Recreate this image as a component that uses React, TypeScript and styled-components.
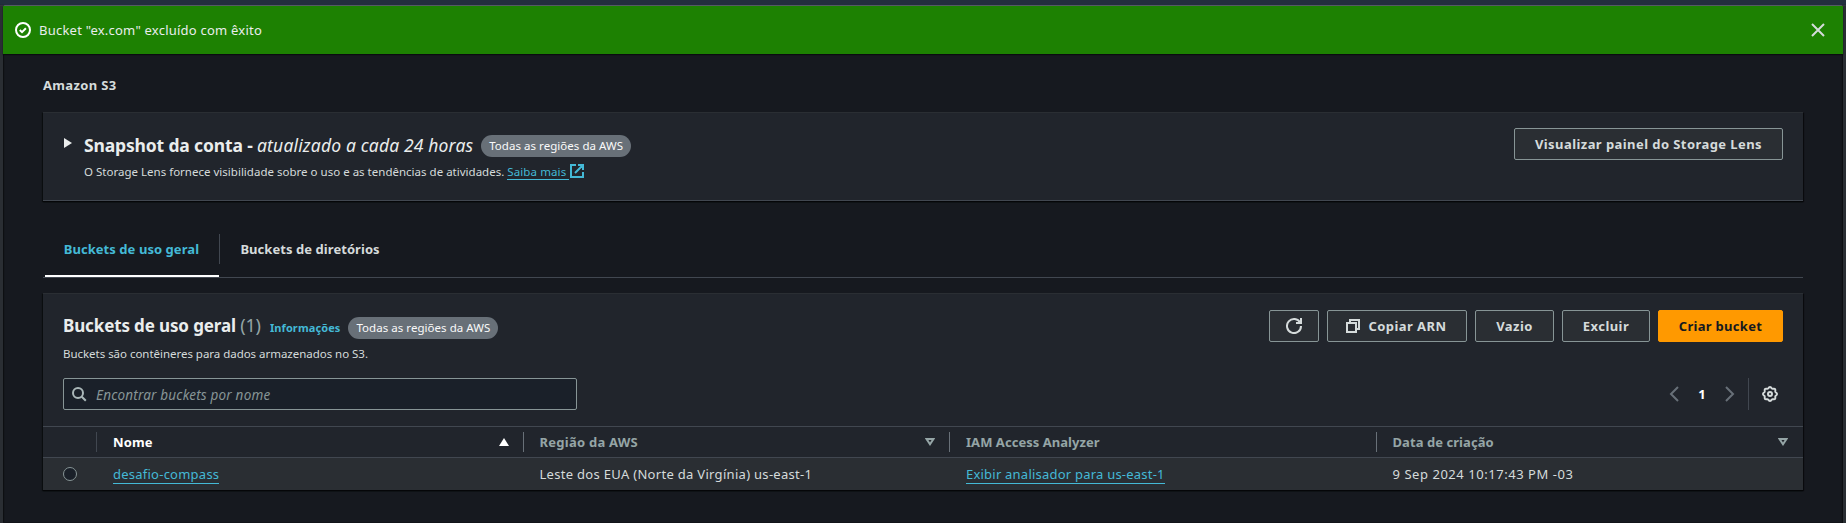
import React from "react";
import styled, { createGlobalStyle, css } from "styled-components";

const c = {
  page: "#16191f",
  panel: "#21252c",
  raised: "#2a2e33",
  line: "#414750",
  control: "#879596",
  text: "#d5dbdb",
  heading: "#eaeded",
  muted: "#95a5a6",
  link: "#44b9d6",
};

const GlobalStyle = createGlobalStyle`
  * { box-sizing: border-box; }
  body {
    margin: 0;
    background: ${c.page};
    color: ${c.text};
    font-family: "Noto Sans", sans-serif;
    font-size: 13px;
    line-height: 20px;
  }
  h1, h2, p { margin: 0; }
  button { font-family: inherit; cursor: pointer; }
  svg { display: block; flex: none; }
`;

const Shell = styled.div`
  display: flex;
  flex-direction: column;
  height: 523px;
  overflow: hidden;
  white-space: nowrap;
`;
const TopBar = styled.div`
  flex: none;
  height: 6px;
  background: #232f3e;
  border-bottom: 1px solid #545b64;
`;
const Body = styled.div`
  display: flex;
  flex: 1;
  min-height: 0;
`;
const Rail = styled.div`
  width: 3px;
  background: ${c.raised};
  box-shadow: 0 0 1px 1px rgba(0, 0, 0, 0.4);
`;
const Main = styled.main`
  flex: 1;
  min-width: 0;
  border-bottom: 1px solid #111318;
`;
const Flash = styled.div`
  display: flex;
  align-items: center;
  height: 48px;
  padding: 0 17px 0 12px;
  gap: 8px;
  background: #1d8102;
  color: ${c.heading};
  box-shadow: 0 1px 1px #0a0c0f;
  position: relative;
  letter-spacing: 0.23px;
`;
const FlashText = styled.span`
  flex: 1;
`;
const Content = styled.div`
  padding: 0 40px;
`;
const Breadcrumb = styled.div`
  height: 58px;
  padding-top: 21px;
  font-weight: 700;
  letter-spacing: 0.35px;
`;
const panel = css`
  background: ${c.panel};
  border-top: 1px solid ${c.raised};
  box-shadow: 0 1px 1px #050608, 1px 1px 1px rgba(0, 0, 0, 0.5), -1px 1px 1px rgba(0, 0, 0, 0.4);
`;
const Snapshot = styled.section`
  ${panel}
  display: flex;
  height: 89px;
  padding: 15px 20px 0 21px;
  border-bottom: 1px solid ${c.line};
`;
const Toggle = styled.div`
  width: 20px;
  padding-top: 10px;
`;
const SnapshotBody = styled.div`
  flex: 1;
`;
const TitleRow = styled.div`
  display: flex;
  align-items: center;
  height: 34px;
`;
const SnapshotTitle = styled.h2`
  font-size: 17.5px;
  line-height: 24px;
  font-weight: 700;
  letter-spacing: -0.15px;
  color: ${c.heading};
  em {
    font-weight: 400;
    letter-spacing: 0.16px;
  }
`;
const Badge = styled.span<{ $left: number }>`
  height: 22px;
  margin: 2px 0 0 ${(p) => p.$left}px;
  padding: 0 8px;
  border-radius: 11px;
  background: #687078;
  color: #fafafa;
  font-size: 11.5px;
  line-height: 22px;
  letter-spacing: 0.04px;
`;
const Small = styled.p<{ $ls?: number }>`
  display: flex;
  margin-top: 1px;
  font-size: 11.5px;
  line-height: 18px;
  letter-spacing: ${(p) => p.$ls ?? 0}px;
`;
const Link = styled.a`
  color: ${c.link};
  box-shadow: inset 0 -1px 0 ${c.link};
`;
const MoreLink = styled(Link)`
  height: 17px;
  margin-left: 3px;
  padding-right: 3px;
  letter-spacing: 0.1px;
`;
const Button = styled.button<{ $primary?: boolean; $icon?: boolean; $width: number }>`
  display: flex;
  flex: none;
  align-items: center;
  justify-content: center;
  gap: 8px;
  width: ${(p) => p.$width}px;
  height: 32px;
  padding: 0 ${(p) => (p.$icon ? 3 : 0)}px 0 0;
  border: 1px solid ${(p) => (p.$primary ? "#ff9900" : c.control)};
  border-radius: 2px;
  background: ${(p) => (p.$primary ? "#ff9900" : c.raised)};
  color: ${(p) => (p.$primary ? "#16191f" : c.text)};
  font-size: 13px;
  font-weight: 700;
  line-height: 20px;
  letter-spacing: ${(p) => (p.$primary ? 0.3 : 0.43)}px;
`;
const Tabs = styled.nav`
  display: flex;
  align-items: flex-end;
  height: 77px;
  margin-bottom: 15px;
  border-bottom: 1px solid ${c.line};
  font-weight: 700;
  letter-spacing: 0.06px;
`;
const Tab = styled.div<{ $active?: boolean }>`
  height: 43px;
  margin-left: ${(p) => (p.$active ? 2 : 0)}px;
  padding: 5px 20px 0 ${(p) => (p.$active ? 18.7 : 20.3)}px;
  color: ${(p) => (p.$active ? c.link : c.text)};
  border-bottom: 2px solid ${(p) => (p.$active ? "#ffffff" : "transparent")};
`;
const Divider = styled.div<{ $h: number; $color?: string }>`
  flex: none;
  width: 1px;
  height: ${(p) => p.$h}px;
  background: ${(p) => p.$color ?? c.line};
`;
const TabDivider = styled(Divider)`
  margin-bottom: 13px;
`;
const Buckets = styled.section`
  ${panel}
  height: 197px;
`;
const BucketsHeader = styled.header`
  display: flex;
  height: 84px;
  padding: 16px 20px 0;
`;
const HeaderText = styled.div`
  flex: 1;
`;
const BucketsTitle = styled.h1`
  font-size: 17px;
  line-height: 24px;
  font-weight: 700;
  letter-spacing: -0.13px;
  color: ${c.heading};
  margin-top: -3px;
  span {
    color: ${c.muted};
    font-weight: 400;
    font-size: 18px;
  }
`;
const InfoLink = styled.a`
  margin: 2px 0 0 9px;
  color: ${c.link};
  font-size: 11px;
  font-weight: 700;
  letter-spacing: 0.1px;
`;
const Actions = styled.div`
  display: flex;
  gap: 8px;
`;
const Tools = styled.div`
  display: flex;
  align-items: center;
  justify-content: space-between;
  height: 32px;
  padding: 0 25px 0 20px;
  margin-bottom: 16px;
`;
const Search = styled.label`
  display: flex;
  align-items: center;
  gap: 9px;
  width: 514px;
  height: 32px;
  padding: 0 7px;
  border: 1px solid ${c.control};
  border-radius: 2px;
  background: #1a2029;
  color: #aab7b8;
`;
const SearchInput = styled.input`
  flex: 1;
  padding: 2px 0 0;
  border: 0;
  outline: 0;
  background: none;
  font: italic 13.5px/20px "Noto Sans", sans-serif;
  letter-spacing: 0.19px;
  &::placeholder {
    color: #879596;
    opacity: 1;
  }
`;
const Pager = styled.div`
  display: flex;
  align-items: center;
  color: #687078;
`;
const PageNumber = styled.span`
  width: 40px;
  text-align: center;
  color: #ffffff;
  font-weight: 700;
`;
const PagerDivider = styled(Divider)`
  margin: 0 13px 0 10px;
`;
const Row = styled.div<{ $head?: boolean }>`
  display: grid;
  grid-template-columns: 54px repeat(4, 1fr);
  height: 32px;
  border: solid ${c.line};
  border-width: ${(p) => (p.$head ? "1px 0" : "0")};
  background: ${(p) => (p.$head ? c.panel : c.raised)};
`;
const SelectCell = styled.div<{ $head?: boolean }>`
  display: flex;
  align-items: center;
  justify-content: ${(p) => (p.$head ? "flex-end" : "flex-start")};
  padding-left: 20px;
`;
const HeadCell = styled.div<{ $sorted?: boolean; $gap: number; $ls: number }>`
  display: flex;
  align-items: center;
  justify-content: space-between;
  padding-left: 16px;
  color: ${(p) => (p.$sorted ? "#ffffff" : c.muted)};
  font-weight: 700;
  letter-spacing: ${(p) => p.$ls}px;
  svg {
    margin: 0 ${(p) => p.$gap}px 0 auto;
  }
`;
const Cell = styled.div<{ $ls: number }>`
  display: flex;
  align-items: center;
  padding-left: 16px;
  letter-spacing: ${(p) => p.$ls}px;
`;
const Radio = styled.span`
  width: 14px;
  height: 14px;
  border: 1px solid ${c.control};
  border-radius: 50%;
  background: #1a2029;
`;

type IconProps = { d: string; size?: number; color?: string };
const Icon = ({ d, size = 16, color = "currentColor" }: IconProps) => (
  <svg width={size} height={size} viewBox="0 0 16 16" fill="none" stroke={color} strokeWidth="2">
    <path d={d} />
  </svg>
);

const gearOutline =
  Array.from({ length: 96 }, (_, i) => {
    const a = (i / 96) * Math.PI * 2;
    const r = 6.4 + 0.6 * Math.cos(8 * a);
    return `${i ? "L" : "M"}${(8 + r * Math.cos(a)).toFixed(2)} ${(8 + r * Math.sin(a)).toFixed(2)}`;
  }).join("") + "Z";

const Gear = () => (
  <svg width="16" height="16" viewBox="0 0 16 16" fill="none" stroke={c.text}>
    <path d={gearOutline} strokeWidth="1.9" />
    <circle cx="8" cy="8" r="2" strokeWidth="2" />
  </svg>
);

const SortIcon = ({ ascending }: { ascending?: boolean }) => (
  <svg width="10" height="8" viewBox="0 0 10 8" fill="none" stroke={c.muted} strokeWidth="2">
    {ascending ? (
      <path d="M5 0 10 8H0Z" fill="#ffffff" stroke="none" />
    ) : (
      <path d="M1.6 1h6.8L5 6.2Z" />
    )}
  </svg>
);

const columns = [
  { label: "Nome", ls: 0.1, sorted: true, sortable: true },
  { label: "Região da AWS", ls: 0.25, sortable: true },
  { label: "IAM Access Analyzer", ls: 0.04 },
  { label: "Data de criação", ls: 0.06, sortable: true },
];

export default function App() {
  return (
    <Shell>
      <GlobalStyle />
      <TopBar />
      <Body>
        <Rail />
        <Main>
          <Flash>
            <svg width="16" height="16" viewBox="0 0 16 16" fill="none" stroke="#fff" strokeWidth="2">
              <circle cx="8" cy="8" r="7" />
              <path d="m4.8 8 2.2 2.1 3.9-3.9" />
            </svg>
            <FlashText>Bucket "ex.com" excluído com êxito</FlashText>
            <Icon d="m2 2 12 12M14 2 2 14" color={c.text} />
          </Flash>
          <Content>
            <Breadcrumb>Amazon S3</Breadcrumb>
            <Snapshot>
              <Toggle>
                <svg width="8" height="10" viewBox="0 0 8 10" fill={c.heading}>
                  <path d="M0 0 8 5 0 10Z" />
                </svg>
              </Toggle>
              <SnapshotBody>
                <TitleRow>
                  <SnapshotTitle>
                    Snapshot da conta - <em>atualizado a cada 24 horas</em>
                  </SnapshotTitle>
                  <Badge $left={8}>Todas as regiões da AWS</Badge>
                </TitleRow>
                <Small $ls={0.01}>
                  O Storage Lens fornece visibilidade sobre o uso e as tendências de atividades.
                  <MoreLink>Saiba mais</MoreLink>
                  <Icon d="M7 2H2v12h12V9M9 2h5v5M6 10l7.5-7.5" color={c.link} />
                </Small>
              </SnapshotBody>
              <Button $width={269}>Visualizar painel do Storage Lens</Button>
            </Snapshot>
            <Tabs>
              <Tab $active>Buckets de uso geral</Tab>
              <TabDivider $h={30} />
              <Tab>Buckets de diretórios</Tab>
            </Tabs>
            <Buckets>
              <BucketsHeader>
                <HeaderText>
                  <TitleRow>
                    <BucketsTitle>
                      Buckets de uso geral <span>(1)</span>
                    </BucketsTitle>
                    <InfoLink>Informações</InfoLink>
                    <Badge $left={8}>Todas as regiões da AWS</Badge>
                  </TitleRow>
                  <Small $ls={-0.03}>Buckets são contêineres para dados armazenados no S3.</Small>
                </HeaderText>
                <Actions>
                  <Button $width={50} aria-label="Atualizar">
                    <Icon d="M10 5h5V0M15 8a7 7 0 1 1-.8-3.2" />
                  </Button>
                  <Button $width={140} $icon>
                    <Icon d="M2 5h9v9H2zM5 5V2h9v9h-3" />
                    Copiar ARN
                  </Button>
                  <Button $width={79}>Vazio</Button>
                  <Button $width={88}>Excluir</Button>
                  <Button $width={125} $primary>
                    Criar bucket
                  </Button>
                </Actions>
              </BucketsHeader>
              <Tools>
                <Search>
                  <svg width="16" height="16" viewBox="0 0 16 16" fill="none" stroke="currentColor" strokeWidth="2">
                    <circle cx="7" cy="7" r="5" />
                    <path d="m10.8 10.8 4 4" />
                  </svg>
                  <SearchInput placeholder="Encontrar buckets por nome" />
                </Search>
                <Pager>
                  <Icon d="m12 1-7 7 7 7" />
                  <PageNumber>1</PageNumber>
                  <Icon d="m4 1 7 7-7 7" />
                  <PagerDivider $h={32} />
                  <Gear />
                </Pager>
              </Tools>
              <Row $head>
                <SelectCell $head>
                  <Divider $h={20} />
                </SelectCell>
                {columns.map((col, i) => (
                  <HeadCell key={col.label} $sorted={col.sorted} $gap={i < 3 ? 14 : 15} $ls={col.ls}>
                    {col.label}
                    {col.sortable && <SortIcon ascending={col.sorted} />}
                    {i < 3 && <Divider $h={20} $color="#687078" />}
                  </HeadCell>
                ))}
              </Row>
              <Row>
                <SelectCell>
                  <Radio />
                </SelectCell>
                <Cell $ls={0.24}>
                  <Link>desafio-compass</Link>
                </Cell>
                <Cell $ls={0.3}>Leste dos EUA (Norte da Virgínia) us-east-1</Cell>
                <Cell $ls={0.22}>
                  <Link>Exibir analisador para us-east-1</Link>
                </Cell>
                <Cell $ls={0.54}>9 Sep 2024 10:17:43 PM -03</Cell>
              </Row>
            </Buckets>
          </Content>
        </Main>
        <Rail />
      </Body>
    </Shell>
  );
}
